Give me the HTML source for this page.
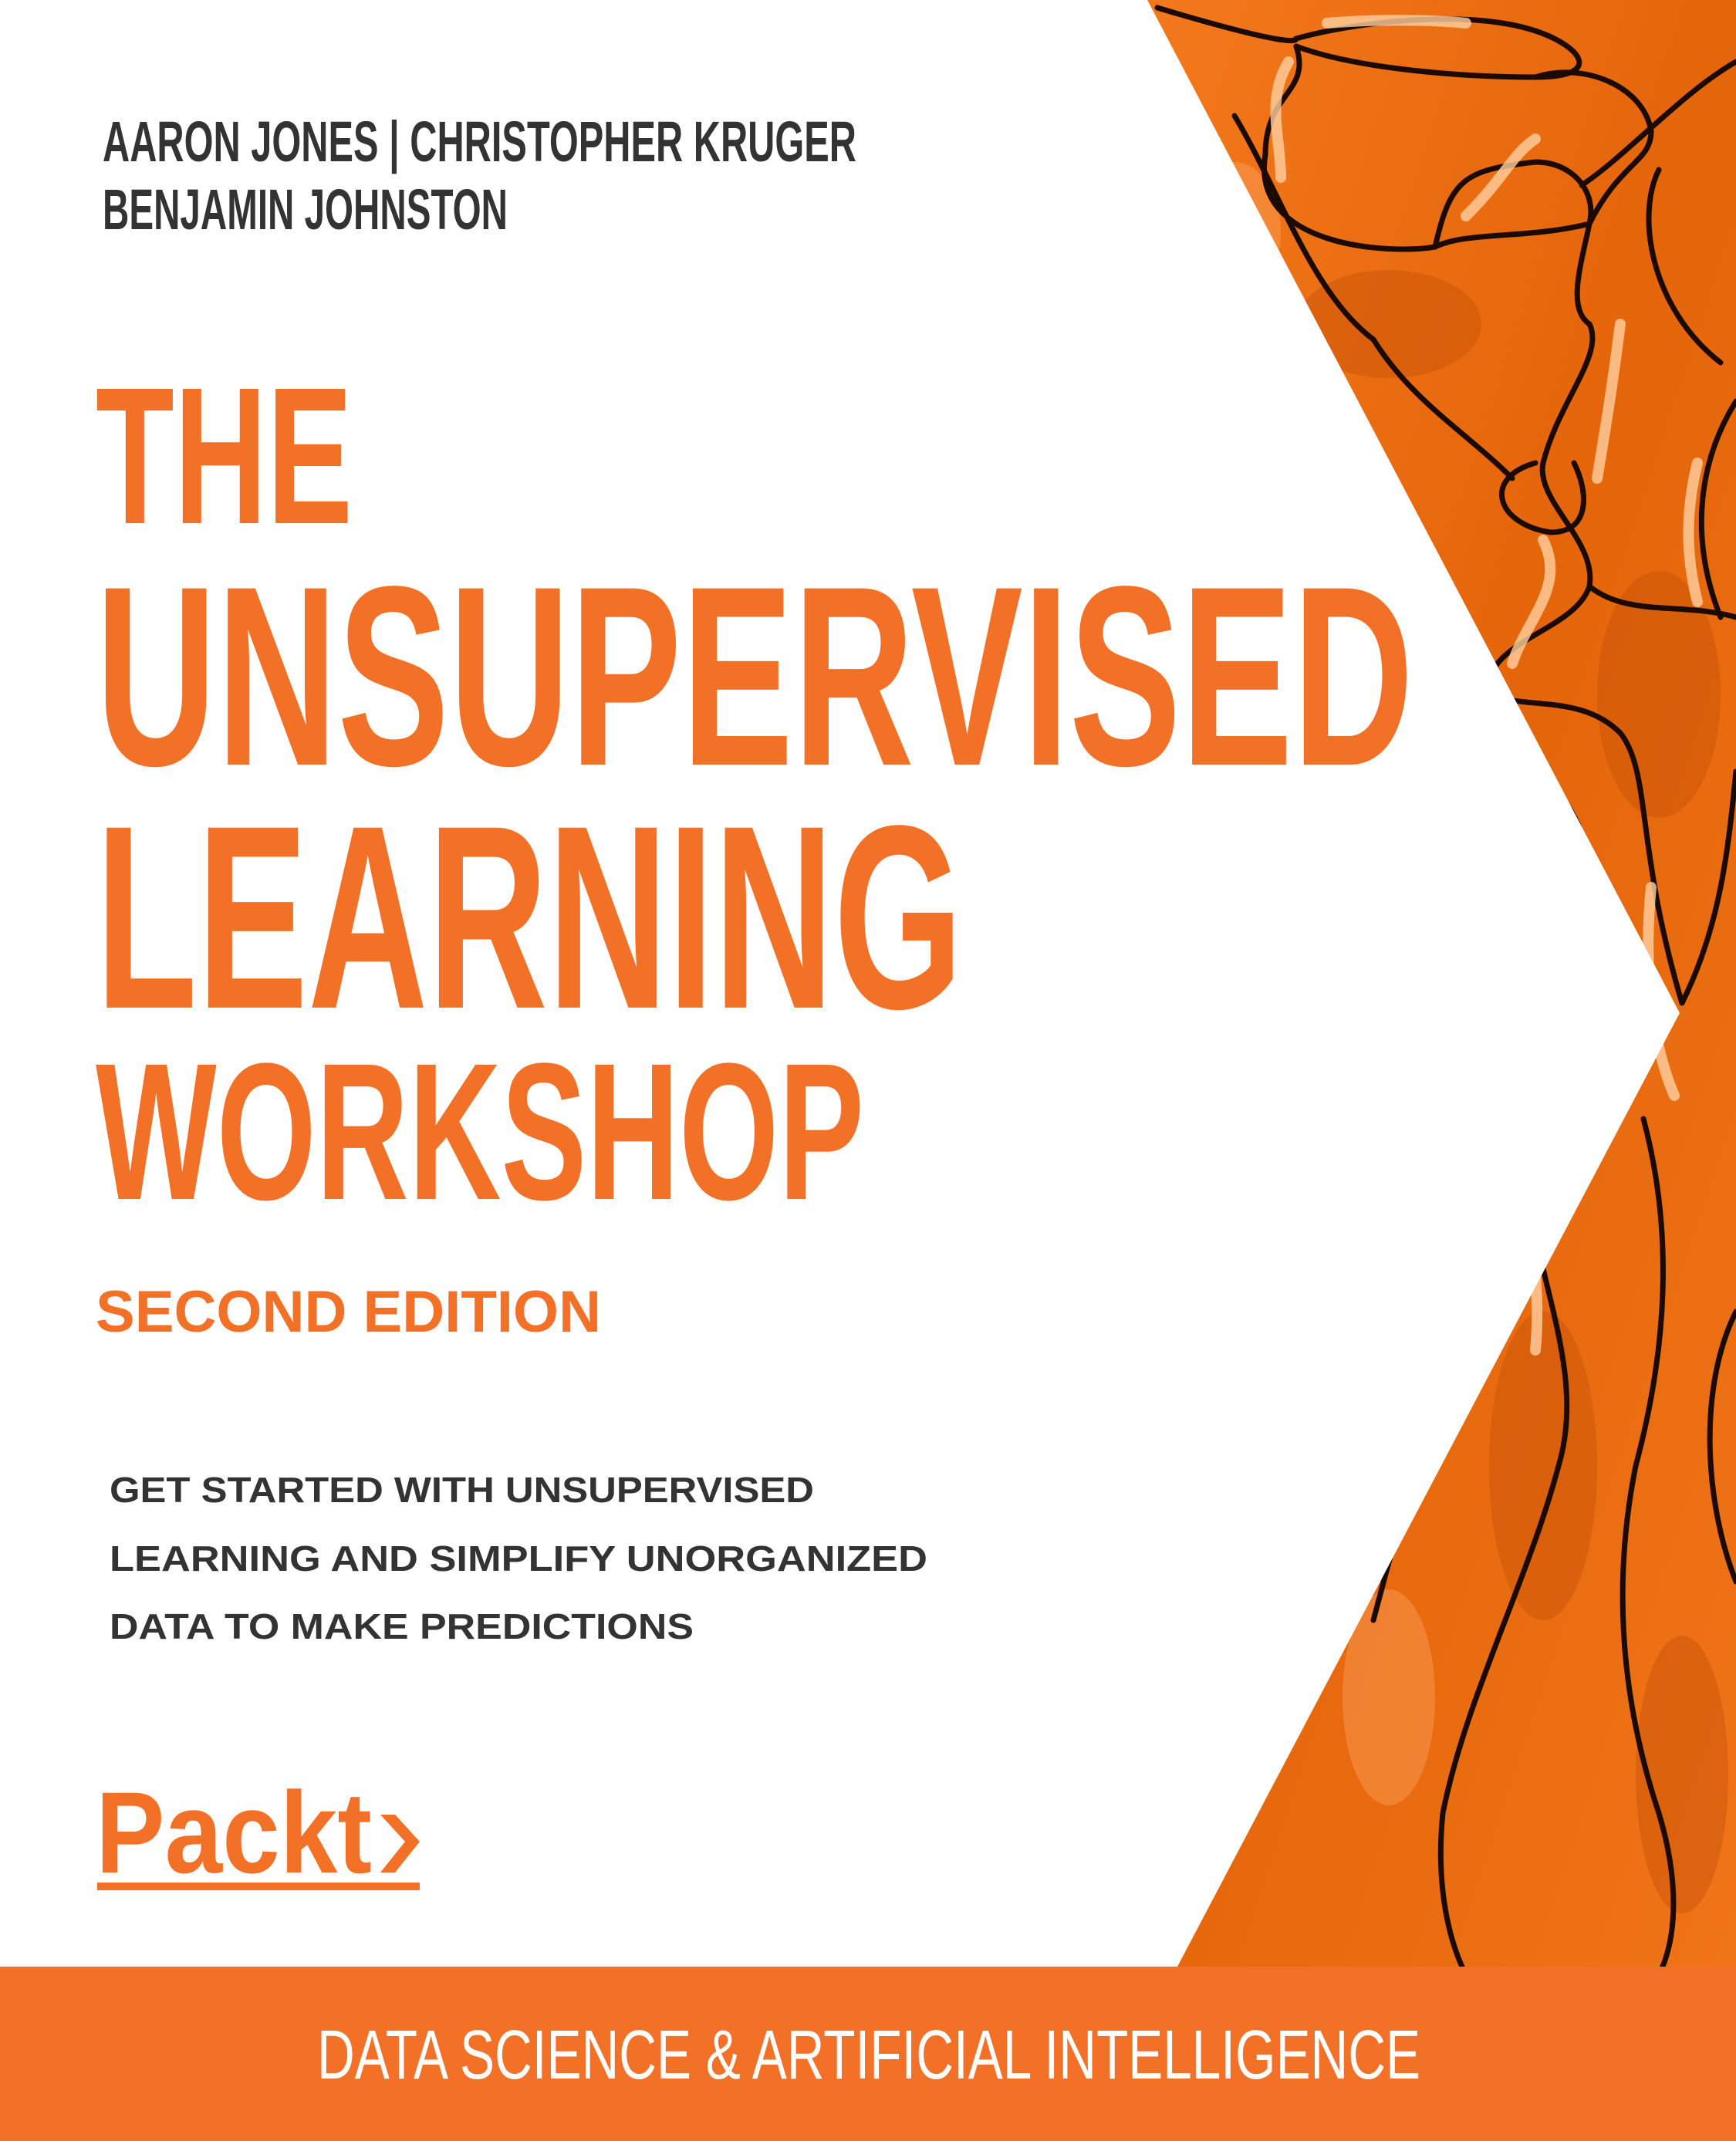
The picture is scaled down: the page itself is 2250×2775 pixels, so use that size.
<!DOCTYPE html>
<html><head><meta charset="utf-8"><style>html,body{margin:0;padding:0;background:#fff}svg{display:block}</style></head>
<body>
<svg width="2250" height="2775" viewBox="0 0 2250 2775" xmlns="http://www.w3.org/2000/svg">
<defs>
<linearGradient id="og" x1="0" y1="0" x2="1" y2="1">
<stop offset="0" stop-color="#f57a1e"/><stop offset="0.5" stop-color="#e5650a"/><stop offset="1" stop-color="#f07418"/>
</linearGradient>
</defs>
<rect x="1400" y="0" width="850" height="2560" fill="url(#og)"/>
<g fill="#c95408" opacity="0.5">
<ellipse cx="1800" cy="420" rx="120" ry="70"/>
<ellipse cx="2150" cy="900" rx="80" ry="160"/>
<ellipse cx="2000" cy="1900" rx="70" ry="200"/>
<ellipse cx="2180" cy="2300" rx="60" ry="180"/>
</g>
<g fill="#ffb070" opacity="0.35">
<ellipse cx="1600" cy="300" rx="60" ry="90"/>
<ellipse cx="1900" cy="1600" rx="80" ry="120"/>
<ellipse cx="1800" cy="2200" rx="60" ry="140"/>
</g>
<g fill="none" stroke="#1a0a00" stroke-width="7" stroke-linecap="round">
<path d="M1500 10 C1600 40 1680 60 1680 50 C1750 30 1900 10 1990 40 C2050 60 2080 100 1990 100 C1900 100 1760 90 1680 60"/>
<path d="M1680 60 C1700 120 1640 120 1640 200 C1620 320 1800 330 1860 320 C1900 300 1980 310 2060 290 C2070 250 2040 210 1990 210 C1900 220 1880 230 1860 320"/>
<path d="M1990 100 C2050 80 2130 110 2140 170 C2140 210 2100 210 2060 290 C2050 340 2030 400 2060 420 C2080 460 2020 520 2000 600 C1990 650 2070 700 2060 760 C2040 820 1920 830 1930 900 C1940 960 2020 1000 2050 1080 C2080 1160 2070 1220 2040 1280"/>
<path d="M2050 240 C2110 200 2180 120 2250 80"/>
<path d="M2150 220 C2120 280 2140 400 2230 470"/>
<path d="M1990 600 C1920 620 1940 680 2010 690 C2060 690 2060 640 2040 600"/>
<path d="M2040 1280 C2000 1400 1960 1500 1990 1600 C2010 1700 2050 1800 2020 1900 C1980 2050 1900 2200 1870 2350 C1860 2450 1880 2520 1900 2560"/>
<path d="M2130 1450 C2170 1600 2160 1750 2120 1900 C2090 2050 2100 2200 2150 2350 C2180 2450 2170 2520 2150 2560"/>
<path d="M2180 1300 C2230 1200 2240 1100 2250 1000"/>
<path d="M1780 440 C1830 520 1900 560 1960 620"/>
<path d="M2060 760 C2110 800 2180 780 2250 800"/>
<path d="M1930 900 C1980 920 2050 900 2100 950 C2140 1000 2120 1100 2180 1300"/>
<path d="M2250 520 C2200 600 2190 700 2230 800"/>
<path d="M1600 150 C1660 250 1700 380 1780 440"/>
<path d="M1900 1650 C1860 1800 1820 1950 1780 2100"/>
<path d="M2250 1700 C2200 1800 2210 1950 2250 2050"/>
</g>
<g fill="none" stroke="#ffd0a0" stroke-width="14" stroke-linecap="round" opacity="0.8">
<path d="M1720 30 C1780 25 1850 25 1900 30"/>
<path d="M1670 80 C1640 130 1660 180 1660 230"/>
<path d="M1900 280 C1950 230 1960 200 1990 180"/>
<path d="M2000 700 C2030 760 1980 800 1960 860"/>
<path d="M2100 420 C2090 500 2080 560 2070 620"/>
<path d="M1990 1450 C1970 1550 2000 1650 1990 1750"/>
<path d="M2140 1150 C2130 1250 2140 1350 2170 1420"/>
<path d="M2200 600 C2180 680 2190 740 2200 780"/>
<path d="M1900 1000 C1930 1050 1940 1100 1930 1150"/>
</g>
<polygon points="0,0 1487,0 2177,1313 1526,2549 0,2549" fill="#fff"/>
<rect x="0" y="2549" width="2250" height="226" fill="#f37027"/>
<g font-family="'Liberation Sans Narrow','Liberation Sans',sans-serif" font-weight="bold">
<text x="133" y="209" font-size="74" fill="#333" textLength="977" lengthAdjust="spacingAndGlyphs">AARON JONES | CHRISTOPHER KRUGER</text>
<text x="133" y="297" font-size="74" fill="#333" textLength="525" lengthAdjust="spacingAndGlyphs">BENJAMIN JOHNSTON</text>
<g fill="#f37027">
<text x="124" y="678" font-size="253" textLength="333" lengthAdjust="spacingAndGlyphs">THE</text>
<text x="124" y="991" font-size="332" textLength="1708" lengthAdjust="spacingAndGlyphs">UNSUPERVISED</text>
<text x="124" y="1306" font-size="339" textLength="1124" lengthAdjust="spacingAndGlyphs">LEARNING</text>
<text x="124" y="1554" font-size="253" textLength="996" lengthAdjust="spacingAndGlyphs">WORKSHOP</text>
</g>
<text x="411" y="2694" font-size="90" font-weight="normal" fill="#fff" textLength="1430" lengthAdjust="spacingAndGlyphs">DATA SCIENCE &amp; ARTIFICIAL INTELLIGENCE</text>
</g>
<g font-family="'Liberation Sans',sans-serif">
<text x="124" y="1726" font-size="76" font-weight="bold" fill="#f37027" textLength="655" lengthAdjust="spacingAndGlyphs">SECOND EDITION</text>
<g font-size="46" fill="#333" font-weight="bold">
<text x="142" y="1947" textLength="913" lengthAdjust="spacingAndGlyphs">GET STARTED WITH UNSUPERVISED</text>
<text x="142" y="2036" textLength="1060" lengthAdjust="spacingAndGlyphs">LEARNING AND SIMPLIFY UNORGANIZED</text>
<text x="142" y="2124" textLength="757" lengthAdjust="spacingAndGlyphs">DATA TO MAKE PREDICTIONS</text>
</g>
<text x="124" y="2427" font-size="150" font-weight="bold" fill="#f37027" textLength="358" lengthAdjust="spacingAndGlyphs">Packt</text>
</g>
<polygon points="493,2352 512,2352 544,2387 512,2427 493,2427 525,2387" fill="#f37027"/>
<rect x="126" y="2440" width="418" height="10" fill="#f37027"/>
</svg>
</body></html>
